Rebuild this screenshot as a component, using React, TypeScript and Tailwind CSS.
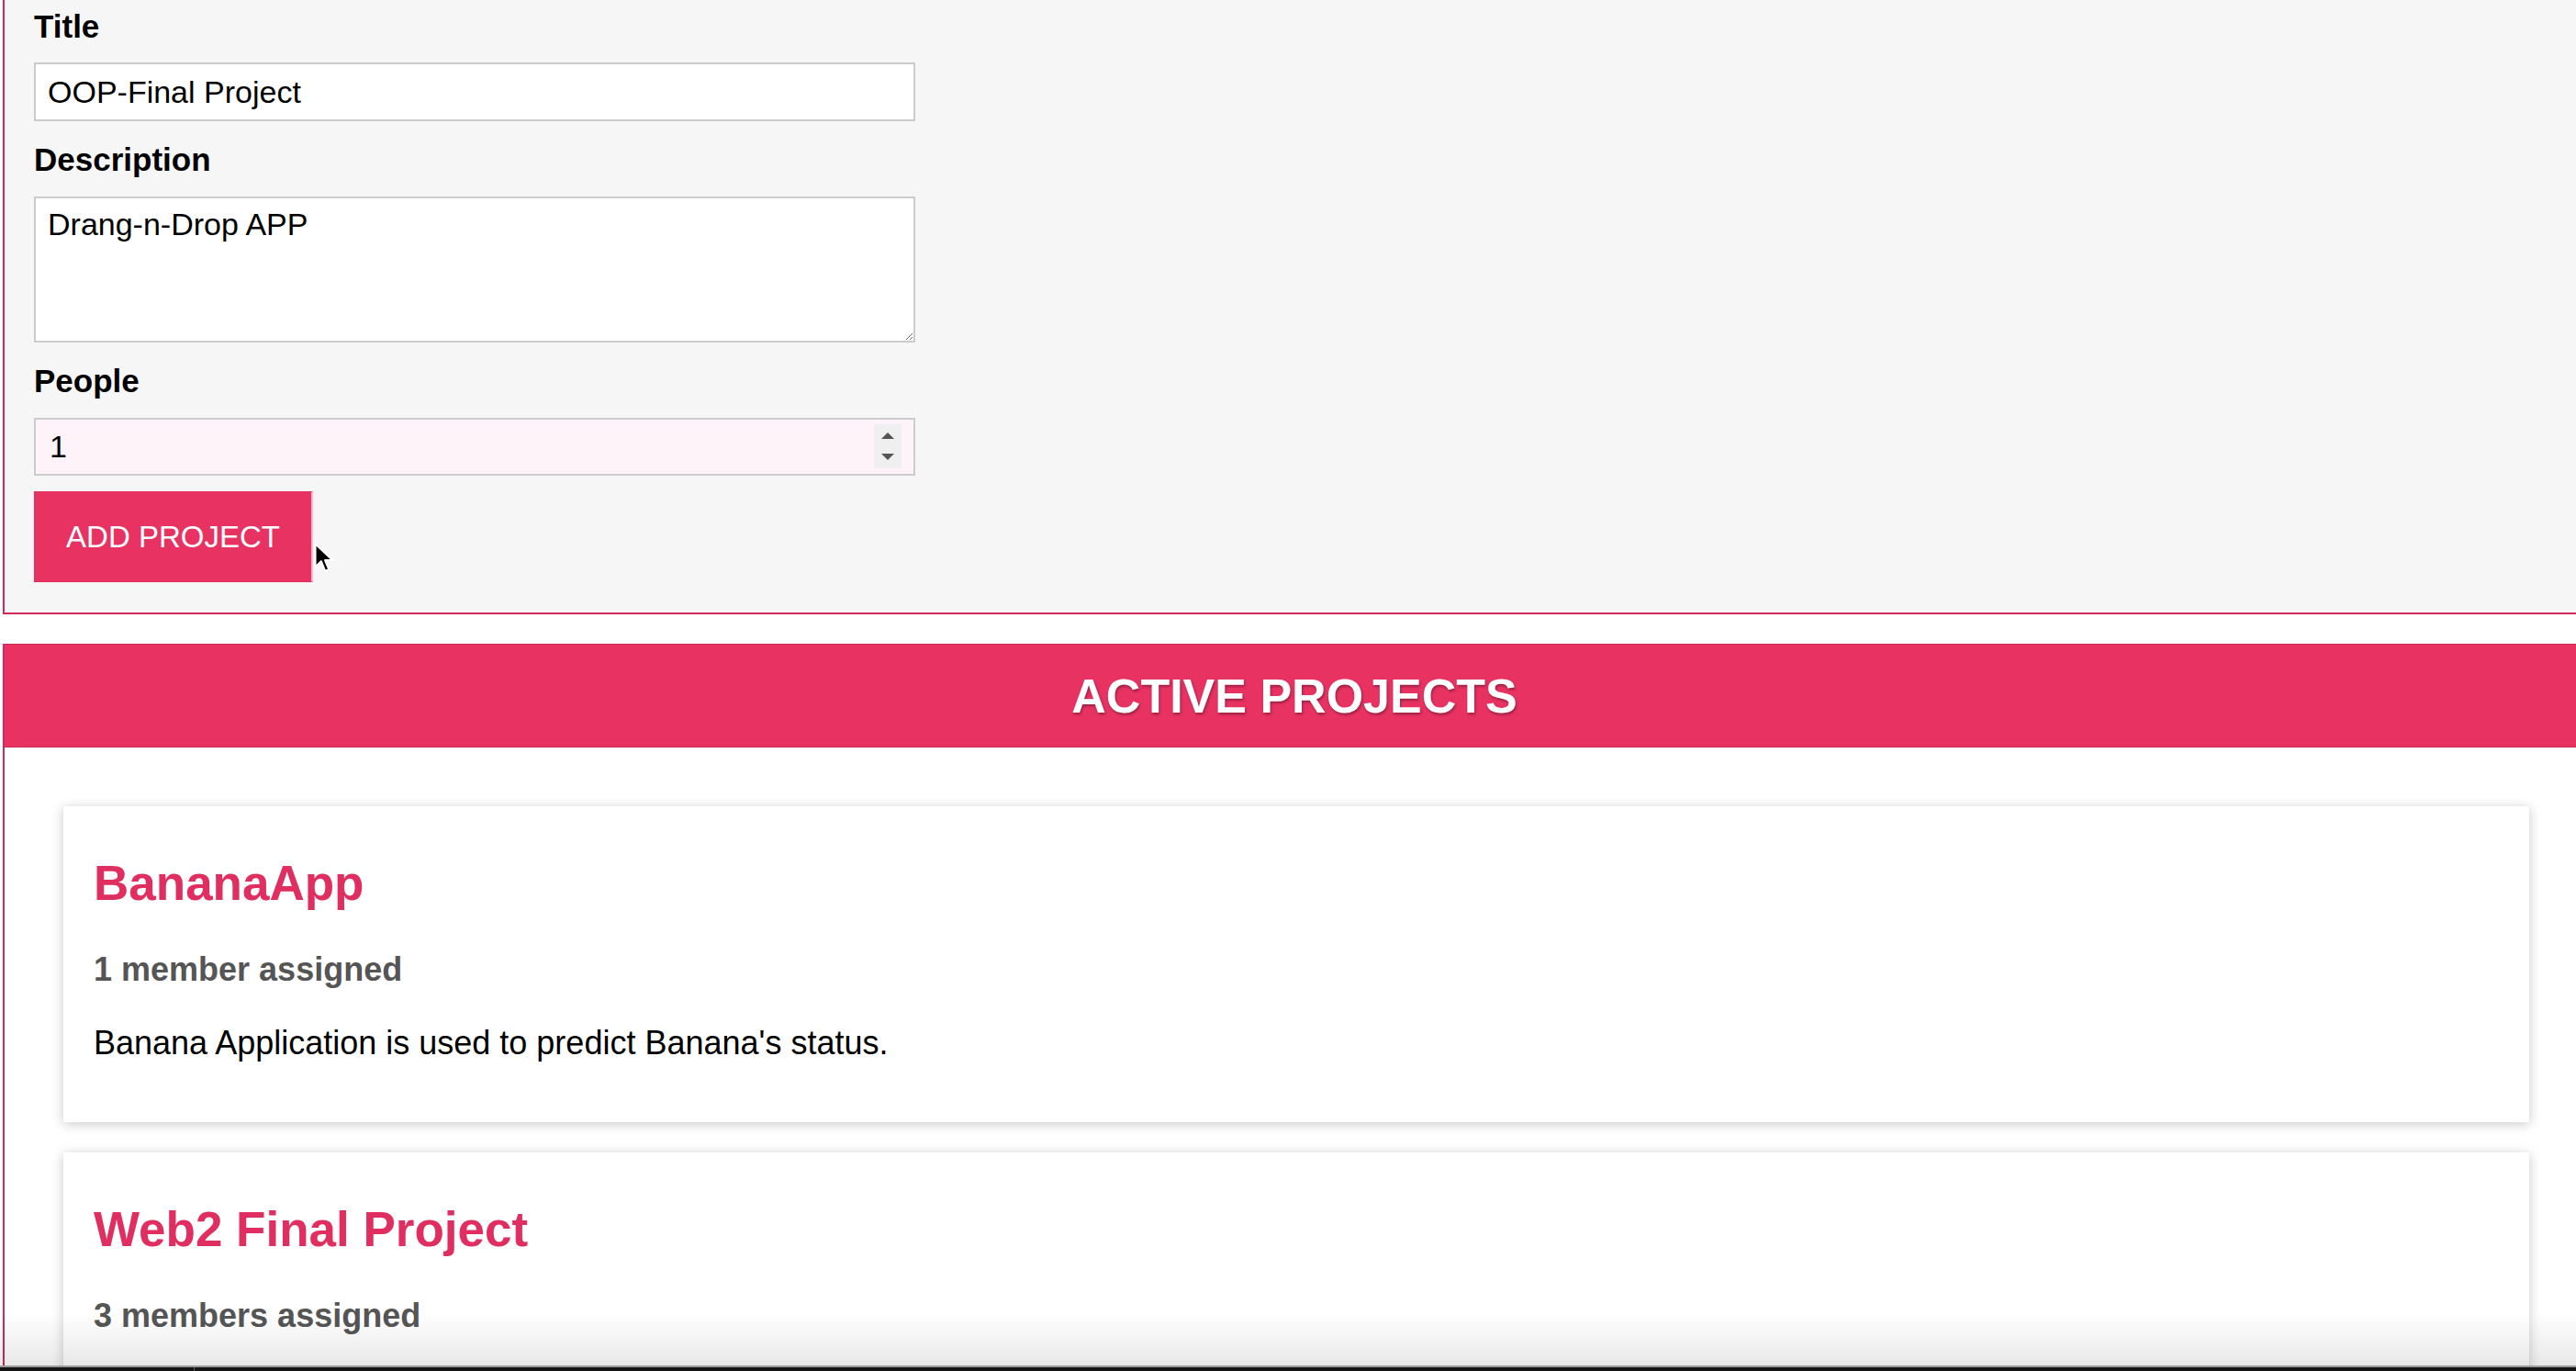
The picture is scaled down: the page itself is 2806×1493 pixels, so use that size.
import { useState } from 'react';

interface Project {
  id: string;
  title: string;
  people: number;
  description: string;
}

const initialProjects: Project[] = [
  {
    id: 'p1',
    title: 'BananaApp',
    people: 1,
    description: "Banana Application is used to predict Banana's status.",
  },
  {
    id: 'p2',
    title: 'Web2 Final Project',
    people: 3,
    description: 'Final project for the Web2 course.',
  },
];

function ProjectItem({ project }: { project: Project }) {
  const members = project.people === 1 ? '1 member' : `${project.people} members`;
  return (
    <li className="bg-white shadow-[0_2px_12px_rgba(0,0,0,0.22)] pl-[33px] pt-[52px] pb-[64px]">
      <h2 className="text-[53px] leading-[64px] font-bold text-[#df2e5f]">{project.title}</h2>
      <h3 className="mt-[40px] text-[36px] leading-[44px] font-bold text-[#555]">{members} assigned</h3>
      <p className="mt-[36px] text-[36px] leading-[44px] text-black">{project.description}</p>
    </li>
  );
}

export default function App() {
  const [projects] = useState<Project[]>(initialProjects);

  return (
    <div className="relative w-[2806px] h-[1493px] overflow-hidden bg-white font-['Liberation_Sans',Arial,sans-serif]">
      {/* Project input form */}
      <form
        className="ml-[3px] w-[2812px] bg-[#f6f6f6] border-l-2 border-b-2 border-[#cf2a5c] pl-8 pt-[9px] pb-[33px]"
        onSubmit={e => e.preventDefault()}
      >
        <label className="block text-[35px] leading-[40px] font-bold text-black">Title</label>
        <input
          type="text"
          defaultValue="OOP-Final Project"
          className="mt-[19px] block w-[960px] h-[64px] border-2 border-[#cccccc] bg-white px-[13px] text-[34px] text-black outline-none"
        />
        <label className="mt-[22px] block text-[35px] leading-[40px] font-bold text-black">Description</label>
        <textarea
          defaultValue="Drang-n-Drop APP"
          className="mt-[20px] block w-[960px] h-[159px] border-2 border-[#cccccc] bg-white px-[13px] pt-2 text-[34px] leading-[40px] text-black outline-none"
        />
        <label className="mt-[22px] block text-[35px] leading-[40px] font-bold text-black">People</label>
        <div className="relative mt-[20px] w-[960px]">
          <input
            type="number"
            defaultValue={1}
            className="block w-full h-[63px] border-2 border-[#cccccc] bg-[#fdf3f8] px-[15px] text-[34px] text-black outline-none [appearance:textfield] [&::-webkit-inner-spin-button]:appearance-none [&::-webkit-outer-spin-button]:appearance-none"
          />
          <div className="absolute right-[15px] top-[7px] w-[30px] h-[48px] bg-[#efefef] flex flex-col items-center justify-center gap-[16px]">
            <svg width="14" height="7" viewBox="0 0 14 7">
              <path d="M7 0 L14 7 L0 7 Z" fill="#555" />
            </svg>
            <svg width="14" height="7" viewBox="0 0 14 7">
              <path d="M0 0 L14 0 L7 7 Z" fill="#555" />
            </svg>
          </div>
        </div>
        <div className="relative mt-[17px] w-fit">
          <button
            type="submit"
            className="block w-[304px] h-[99px] bg-[#e83262] border border-[#e2305e] border-r-2 border-r-[#f6bcd1] text-white text-[33px]"
          >
            ADD PROJECT
          </button>
          {/* mouse cursor */}
          <svg className="absolute left-[304px] top-[55px]" width="24" height="36" viewBox="0 0 22 34">
            <path d="M2 2 L2 26 L8 20 L12 30 L16 28.5 L12 19 L20 19 Z" fill="#000" stroke="#fff" strokeWidth="2" strokeLinejoin="round" />
          </svg>
        </div>
      </form>

      {/* Active projects list */}
      <section className="mt-[32px] ml-[3px] w-[2812px] border-l-2 border-[#cf2a5c] min-h-[900px]">
        <header className="h-[113px] bg-[#e83262] border-y border-[#c92b59] flex items-center justify-center">
          <h2 className="text-[52px] font-bold text-white [text-shadow:1px_2px_3px_rgba(0,0,0,0.35)]">ACTIVE PROJECTS</h2>
        </header>
        <ul className="pl-16 pr-[60px] pt-16 flex flex-col gap-[33px]">
          {projects.map(p => (
            <ProjectItem key={p.id} project={p} />
          ))}
        </ul>
      </section>

      {/* bottom edge of the window */}
      <div className="absolute left-0 right-0 bottom-0">
        <div className="h-[58px] bg-linear-to-b from-transparent to-[rgba(0,0,0,0.09)]" />
        <div className="h-[2px] bg-[#9a9a9a]" />
        <div className="h-[4px] bg-[#151515] flex">
          <div className="w-[212px] border-r border-[#555]" />
        </div>
      </div>
    </div>
  );
}
